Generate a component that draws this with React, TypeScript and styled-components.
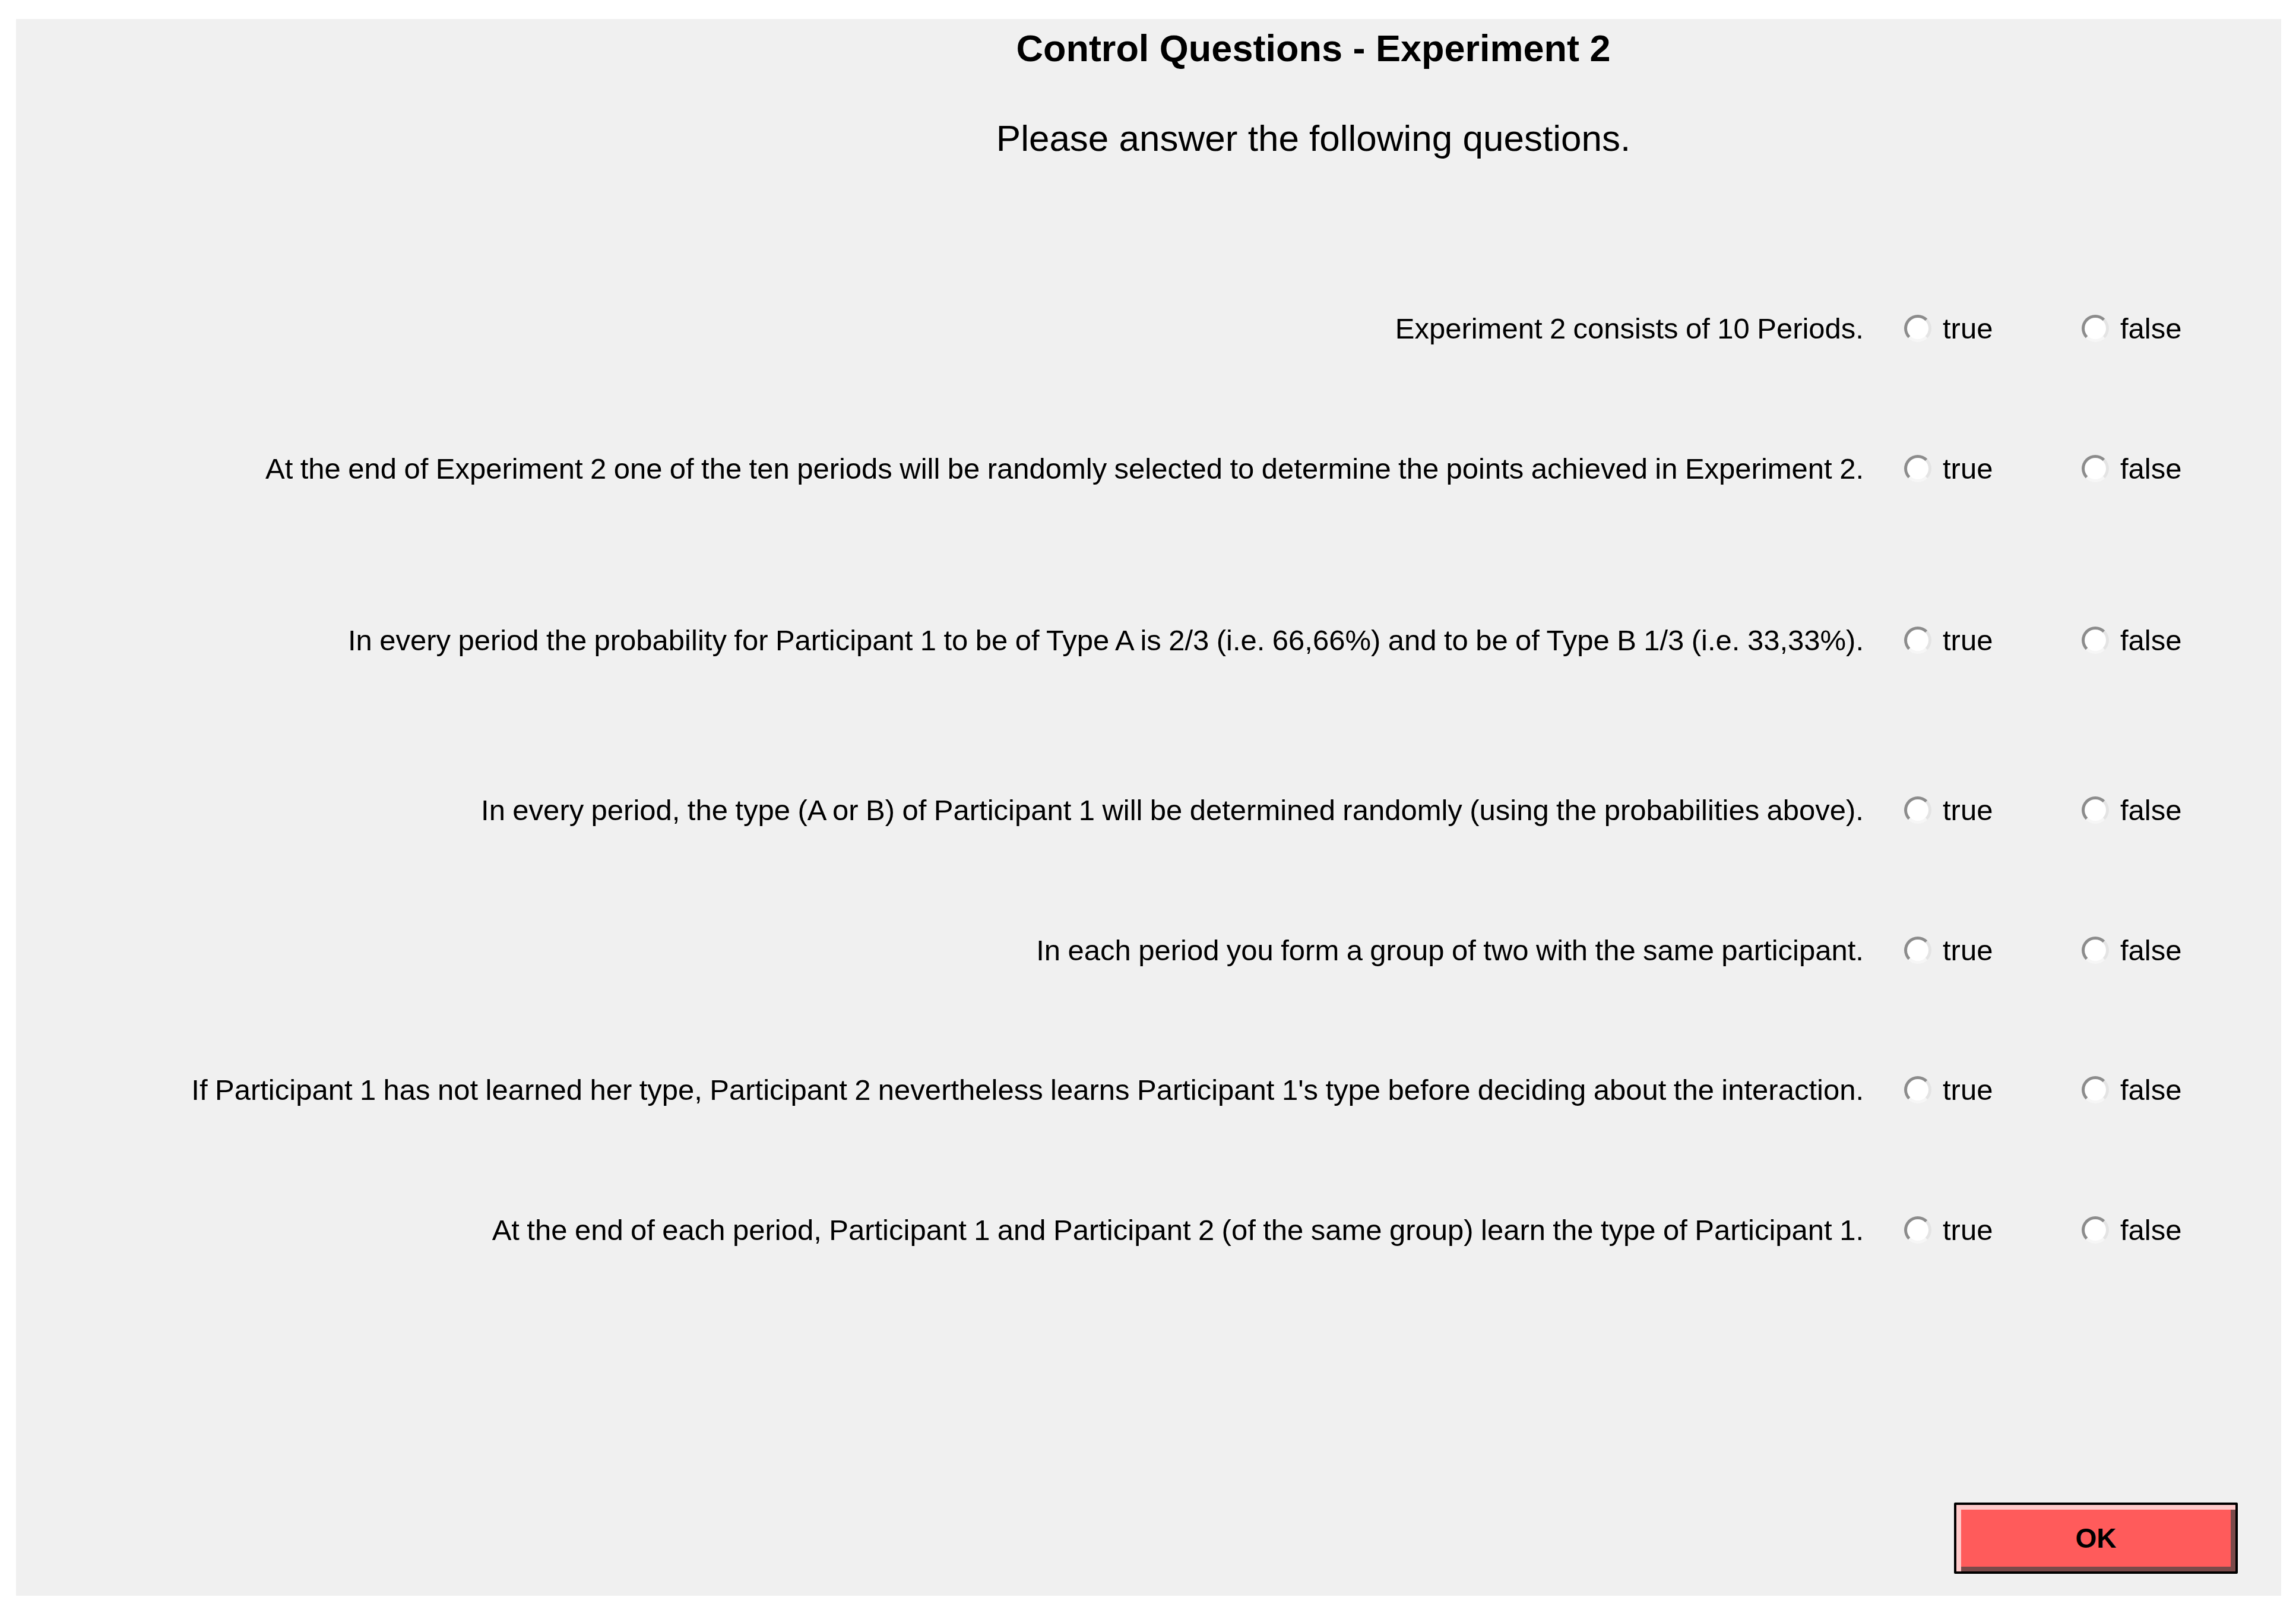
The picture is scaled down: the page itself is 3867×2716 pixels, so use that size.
import React from "react";
import styled, { createGlobalStyle } from "styled-components";

const GlobalStyle = createGlobalStyle`
  html, body {
    margin: 0;
    padding: 0;
    background: #ffffff;
  }
  body {
    font-family: "Liberation Sans", Arial, sans-serif;
    color: #000000;
  }
`;

const Page = styled.div`
  width: 3867px;
  height: 2716px;
  box-sizing: border-box;
  padding: 32px 25px 29px 27px;
  display: flex;
`;

const Panel = styled.main`
  flex: 1;
  background: #f0f0f0;
  display: flex;
  flex-direction: column;
  padding: 13px 37px 37px 0;
`;

const Header = styled.header`
  display: flex;
  flex-direction: column;
  align-items: center;
  padding-left: 592px;
`;

const Title = styled.h1`
  margin: 0;
  font-size: 63px;
  line-height: 72px;
  font-weight: bold;
`;

const Subtitle = styled.p`
  margin: 80px 0 0 0;
  font-size: 62px;
  line-height: 72px;
  font-weight: normal;
`;

const QuestionList = styled.section`
  display: flex;
  flex-direction: column;
  margin-top: 256px;
`;

const QuestionRow = styled.div<{ $gap: number }>`
  display: grid;
  grid-template-columns: 1fr 299px 299px;
  align-items: center;
  height: 56px;
  margin-top: ${(p) => p.$gap}px;
`;

const Label = styled.span`
  text-align: right;
  padding-right: 68px;
  font-size: 49px;
  line-height: 56px;
  word-spacing: -1.2px;
  white-space: nowrap;
`;

const Option = styled.label`
  display: flex;
  align-items: center;
  gap: 19px;
  font-size: 49px;
  line-height: 56px;
`;

const Radio = styled.span`
  width: 46px;
  height: 46px;
  box-sizing: border-box;
  border-radius: 50%;
  border: 5px solid;
  border-color: #8c8c8c #e4e4e4 #f6f6f6 #8c8c8c;
  background: #ffffff;
  flex: none;
`;

const Footer = styled.footer`
  margin-top: auto;
  display: flex;
  justify-content: flex-end;
  padding-right: 36px;
`;

const OkButton = styled.button`
  width: 478px;
  height: 120px;
  box-sizing: border-box;
  border: 4px solid #000000;
  border-radius: 2px;
  background: #ff5b5b;
  box-shadow: inset 8px 8px 0 #ffcaca, inset -8px -8px 0 #7a4a4a;
  font-family: "Liberation Sans", Arial, sans-serif;
  font-size: 46px;
  font-weight: bold;
  color: #000000;
  padding: 0;
  cursor: pointer;
`;

const questions: { text: string; gap: number }[] = [
  { text: "Experiment 2 consists of 10 Periods.", gap: 0 },
  {
    text: "At the end of Experiment 2 one of the ten periods will be randomly selected to determine the points achieved in Experiment 2.",
    gap: 180,
  },
  {
    text: "In every period the probability for Participant 1 to be of Type A is 2/3 (i.e. 66,66%) and to be of Type B 1/3 (i.e. 33,33%).",
    gap: 233,
  },
  {
    text: "In every period, the type (A or B) of Participant 1 will be determined randomly (using the probabilities above).",
    gap: 230,
  },
  { text: "In each period you form a group of two with the same participant.", gap: 180 },
  {
    text: "If Participant 1 has not learned her type, Participant 2 nevertheless learns Participant 1's type before deciding about the interaction.",
    gap: 179,
  },
  {
    text: "At the end of each period, Participant 1 and Participant 2 (of the same group) learn the type of Participant 1.",
    gap: 180,
  },
];

export default function App() {
  return (
    <>
      <GlobalStyle />
      <Page>
        <Panel>
          <Header>
            <Title>Control Questions - Experiment 2</Title>
            <Subtitle>Please answer the following questions.</Subtitle>
          </Header>
          <QuestionList>
            {questions.map((q, i) => (
              <QuestionRow key={i} $gap={q.gap}>
                <Label>{q.text}</Label>
                <Option>
                  <Radio />
                  true
                </Option>
                <Option>
                  <Radio />
                  false
                </Option>
              </QuestionRow>
            ))}
          </QuestionList>
          <Footer>
            <OkButton>OK</OkButton>
          </Footer>
        </Panel>
      </Page>
    </>
  );
}
